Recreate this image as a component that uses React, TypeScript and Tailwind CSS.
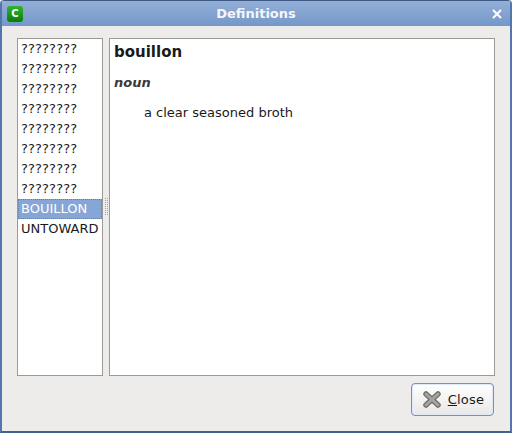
const words = ["????????", "????????", "????????", "????????", "????????", "????????", "????????", "????????"];

function AppIcon() {
  return (
    <div className="flex h-[16px] w-[16px] items-center justify-center rounded-[3px] bg-gradient-to-b from-[#2fb52f] to-[#067d06] text-[10px] font-bold leading-none text-white">
      C
    </div>
  );
}

function CloseIcon() {
  return (
    <svg width="18" height="17" viewBox="0 0 18 17">
      <path d="M3 3 L15 14 M15 3 L3 14" stroke="#6f6f6c" strokeWidth="5.5" strokeLinecap="round" />
      <path d="M3 3 L15 14 M15 3 L3 14" stroke="#a3a3a0" strokeWidth="3" strokeLinecap="round" />
    </svg>
  );
}

export default function App() {
  return (
    <div className="flex h-[433px] w-[512px] flex-col overflow-hidden rounded-t-[4px] border-x-2 border-b-2 border-x-[#5277ac] border-b-[#40608f] bg-[#edeceb] font-['DejaVu_Sans',sans-serif] text-[13px] text-[#1a1a1a]">
      <div className="flex h-[26px] shrink-0 items-center justify-between border-t border-t-[#3d5a86] bg-gradient-to-b from-[#93afd6] to-[#7598c9] pl-[5px] pr-[8px]">
        <AppIcon />
        <span className="mr-[3px] mt-[1px] text-[13px] font-bold text-[#f4f6fa]">Definitions</span>
        <svg width="10" height="10" viewBox="0 0 10 10">
          <path d="M1 1 L9 9 M9 1 L1 9" stroke="#ffffff" strokeWidth="2" />
        </svg>
      </div>

      <div className="flex min-h-0 flex-1 flex-col px-[15px] pb-[15px] pt-[12px]">
        <div className="flex h-[338px] shrink-0">
          <div className="w-[86px] shrink-0 border border-[#9c9a97] bg-white">
            {words.map((word, index) => (
              <div key={index} className="flex h-[20px] items-center pl-[3px] tracking-[0.13px]">
                {word}
              </div>
            ))}
            <div className="flex h-[20px] items-center border border-dotted border-[#5f7fb0] bg-[#86a6d6] pl-[2px] text-white">BOUILLON</div>
            <div className="flex h-[20px] items-center pl-[3px]">UNTOWARD</div>
          </div>

          <div className="flex w-[6px] shrink-0 items-center justify-center">
            <div className="mt-[-1px] h-[17px] w-[4px] bg-[conic-gradient(#a5a4a1_25%,transparent_25%)] bg-[length:2px_2px]" />
          </div>

          <div className="w-[386px] shrink-0 border border-[#9c9a97] bg-white pl-[4px] pt-[3px]">
            <div className="text-[15px] font-bold leading-[20px]">bouillon</div>
            <div className="mt-[13px] text-[13px] font-bold italic leading-[16px] text-[#3a3a3a]">noun</div>
            <div className="ml-[30px] mt-[14px] leading-[16px]">a clear seasoned broth</div>
          </div>
        </div>

        <div className="mt-[7px] flex justify-end pr-[1px]">
          <button className="flex h-[33px] w-[83px] items-center justify-center gap-[7px] rounded-[4px] border border-[#6f93c4] bg-gradient-to-b from-white to-[#e9e8e6] pl-[2px] text-[#1a1a1a] shadow-[inset_0_0_0_1px_#dfe8f4]">
            <CloseIcon />
            <span className="tracking-[0.2px]">
              <span className="underline">C</span>lose
            </span>
          </button>
        </div>
      </div>
    </div>
  );
}
